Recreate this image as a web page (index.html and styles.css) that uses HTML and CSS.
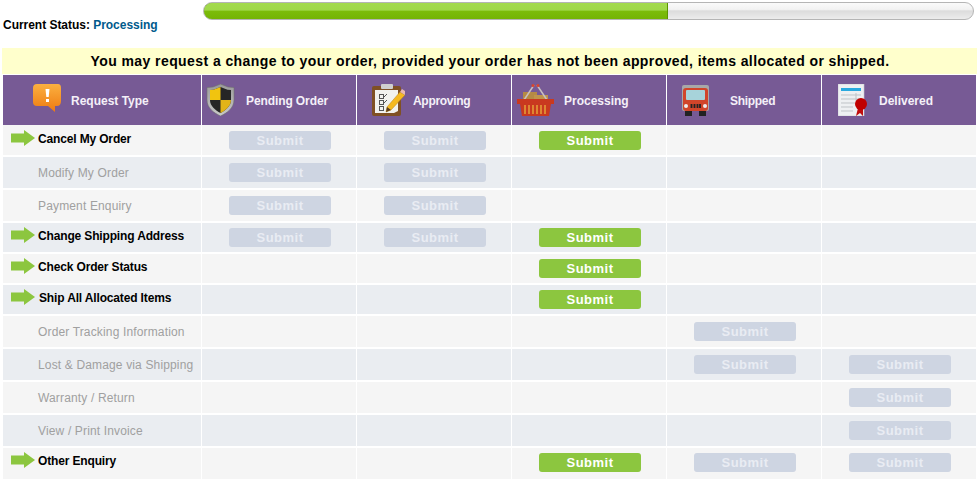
FILE: index.html
```html
<!DOCTYPE html>
<html lang="en">
  <head>
    <meta charset="UTF-8" />
    <meta name="viewport" content="width=device-width, initial-scale=1.0" />
    <title>Order Request</title>
    <link rel="stylesheet" href="styles.css">
  </head>
  <body>
    <svg class="defs" width="0" height="0">
      <symbol id="arrow" viewBox="0 0 24 16">
        <polygon points="0,3.500 13,3.500 13,0 24,8 13,16 13,12.500 0,12.500" fill="#8cc63f" />
      </symbol>
    </svg>

    <!-- status and progress -->
    <div class="top">
      <p class="status">Current Status: <span>Processing</span></p>
      <div class="bar"><div class="fill"></div></div>
    </div>

    <p class="notice">You may request a change to your order, provided your order has not been approved, items allocated or shipped.</p>

    <table class="grid">
      <thead>
        <tr>
          <th class="first">
            <div class="head">
              <svg class="icon" width="29" height="28" viewBox="0 0 29 28">
                <defs>
                  <linearGradient id="bubble" x1="0" y1="0" x2="0" y2="1">
                    <stop offset="0" stop-color="#fbb040" />
                    <stop offset="1" stop-color="#ee7a10" />
                  </linearGradient>
                  <linearGradient id="rim" x1="0" y1="0" x2="0" y2="1">
                    <stop offset="0" stop-color="#9a9a9a" />
                    <stop offset="1" stop-color="#c8c8c8" />
                  </linearGradient>
                </defs>
                <path d="M4 0H25Q28 0 28 4V17Q28 22 24 22H22V28L15 22H4Q0 22 0 18V4Q0 0 4 0Z" fill="url(#bubble)" />
                <path d="M12.500 5H16.500L15.700 13H13.300Z" fill="#fff" />
                <rect x="13" y="15" width="3" height="3" fill="#fff" />
              </svg>
              <span class="first-title">Request Type</span>
            </div>
          </th>
          <th>
            <div class="head">
              <svg class="icon shield" width="29" height="32" viewBox="0 0 29 32">
                <path d="M14.500 0L22 3L28 3.500V16C28 24 21 29 14.500 32C8 29 1 24 1 16V3.500L7 3Z" fill="url(#rim)" stroke="#6e6e6e" stroke-width="0.600" />
                <path d="M14.500 3L21.500 5.800L25 6V16C25 22 19.500 26.500 14.500 29C9.500 26.500 4 22 4 16V6L7.500 5.800Z" fill="#262626" />
                <path d="M14.500 3V16H4V6L7.500 5.800Z" fill="#f1c40f" />
                <path d="M14.500 16H25C25 22 19.500 26.500 14.500 29Z" fill="#e2b418" />
              </svg>
              <span class="pending">Pending Order</span>
            </div>
          </th>
          <th>
            <div class="head">
              <svg class="icon clip" width="33" height="32" viewBox="0 0 33 32">
                <rect x="0" y="2" width="29" height="30" rx="2" fill="#7f5024" />
                <path d="M3 6H26V27L22 29H3Z" fill="#f2f2ee" />
                <rect x="9" y="0" width="12" height="5" rx="1" fill="#cfcfcf" />
                <g fill="none" stroke="#555" stroke-width="1">
                  <rect x="7.500" y="10.500" width="4" height="4" />
                  <rect x="7.500" y="16.500" width="4" height="4" />
                  <rect x="7.500" y="22.500" width="4" height="4" />
                  <path d="M12 13L15 10M12 19L15 16" />
                </g>
                <path d="M15 23L28 8L33 11L19 26L14 28Z" fill="#f5b921" stroke="#b9811a" stroke-width="0.500" />
                <path d="M28 8L30 5L33 7L33 11Z" fill="#e9b9b0" />
                <path d="M15 23L19 26L14 28Z" fill="#5a3d1f" />
              </svg>
              <span class="approving">Approving</span>
            </div>
          </th>
          <th>
            <div class="head">
              <svg class="icon" width="37" height="32" viewBox="0 0 37 32">
                <rect x="6" y="8" width="14" height="13" fill="#b58a44" />
                <rect x="17" y="11" width="14" height="10" fill="#c0944c" />
                <path d="M7 16L17 1M20 1L30 16" stroke="#c8c0c0" stroke-width="1.500" fill="none" />
                <circle cx="16" cy="1.500" r="1.500" fill="#d8442c" />
                <circle cx="21" cy="1.500" r="1.500" fill="#d8442c" />
                <path d="M0 15H37V20H34L32 32H5L3 20H0Z" fill="#c9391f" />
                <path d="M8 21V30M12 21V30M16 21V30M20 21V30M24 21V30M28 21V30" stroke="#e5a13a" stroke-width="1.500" />
              </svg>
              <span class="processing">Processing</span>
            </div>
          </th>
          <th>
            <div class="head">
              <svg class="icon truck" width="27" height="31" viewBox="0 0 27 31">
                <rect x="0" y="0" width="27" height="26" rx="2" fill="#a8a8a8" />
                <rect x="1" y="3" width="25" height="23" rx="3" fill="#d1452a" />
                <rect x="4" y="5" width="19" height="10" rx="1" fill="#a7d3da" />
                <rect x="3" y="26" width="7" height="5" fill="#222" />
                <rect x="17" y="26" width="7" height="5" fill="#222" />
                <circle cx="4" cy="21" r="2" fill="#eee" />
                <circle cx="23" cy="21" r="2" fill="#eee" />
                <path d="M9.500 19V23M12.500 19V23M15.500 19V23M18 19V23" stroke="#222" stroke-width="1.800" />
              </svg>
              <span class="shipped">Shipped</span>
            </div>
          </th>
          <th>
            <div class="head">
              <svg class="icon cert" width="29" height="32" viewBox="0 0 29 32">
                <rect x="0" y="0" width="26" height="32" fill="#eef0f2" stroke="#c5c8cc" stroke-width="0.600" />
                <rect x="3" y="4" width="20" height="3" fill="#29a9df" />
                <path d="M3 11H23M3 15H23M3 19H17M3 23H15M3 27H15M18 9V17" stroke="#bfc3c7" stroke-width="1" />
                <path d="M20 24L18 32L22 29L25 32L25 24Z" fill="#c00d0d" />
                <circle cx="23" cy="20" r="6" fill="#c00000" />
              </svg>
              <span class="delivered">Delivered</span>
            </div>
          </th>
        </tr>
      </thead>
      <tbody>
        <tr class="r32">
          <td class="label on"><div class="cell"><svg class="arrow"><use href="#arrow" /></svg>Cancel My Order</div></td>
          <td><span class="btn off">Submit</span></td>
          <td><span class="btn off">Submit</span></td>
          <td><span class="btn">Submit</span></td>
          <td></td>
          <td></td>
        </tr>
        <tr class="r33 alt">
          <td class="label"><div class="cell">Modify My Order</div></td>
          <td><span class="btn off">Submit</span></td>
          <td><span class="btn off">Submit</span></td>
          <td></td>
          <td></td>
          <td></td>
        </tr>
        <tr class="r33">
          <td class="label"><div class="cell">Payment Enquiry</div></td>
          <td><span class="btn off">Submit</span></td>
          <td><span class="btn off">Submit</span></td>
          <td></td>
          <td></td>
          <td></td>
        </tr>
        <tr class="r31 alt">
          <td class="label on"><div class="cell"><svg class="arrow"><use href="#arrow" /></svg>Change Shipping Address</div></td>
          <td><span class="btn off">Submit</span></td>
          <td><span class="btn off">Submit</span></td>
          <td><span class="btn">Submit</span></td>
          <td></td>
          <td></td>
        </tr>
        <tr class="r31">
          <td class="label on"><div class="cell"><svg class="arrow"><use href="#arrow" /></svg>Check Order Status</div></td>
          <td></td>
          <td></td>
          <td><span class="btn">Submit</span></td>
          <td></td>
          <td></td>
        </tr>
        <tr class="r31 alt">
          <td class="label on"><div class="cell"><svg class="arrow"><use href="#arrow" /></svg><span class="nudge">Ship All Allocated Items</span></div></td>
          <td></td>
          <td></td>
          <td><span class="btn">Submit</span></td>
          <td></td>
          <td></td>
        </tr>
        <tr class="r33">
          <td class="label"><div class="cell">Order Tracking Information</div></td>
          <td></td>
          <td></td>
          <td></td>
          <td><span class="btn off">Submit</span></td>
          <td></td>
        </tr>
        <tr class="r33 alt">
          <td class="label"><div class="cell">Lost &amp; Damage via Shipping</div></td>
          <td></td>
          <td></td>
          <td></td>
          <td><span class="btn off">Submit</span></td>
          <td><span class="btn off">Submit</span></td>
        </tr>
        <tr class="r33">
          <td class="label"><div class="cell">Warranty / Return</div></td>
          <td></td>
          <td></td>
          <td></td>
          <td></td>
          <td><span class="btn off">Submit</span></td>
        </tr>
        <tr class="r33 alt">
          <td class="label"><div class="cell">View / Print Invoice</div></td>
          <td></td>
          <td></td>
          <td></td>
          <td></td>
          <td><span class="btn off">Submit</span></td>
        </tr>
        <tr class="last">
          <td class="label on"><div class="cell"><svg class="arrow"><use href="#arrow" /></svg>Other Enquiry</div></td>
          <td></td>
          <td></td>
          <td><span class="btn">Submit</span></td>
          <td><span class="btn off">Submit</span></td>
          <td><span class="btn off">Submit</span></td>
        </tr>
      </tbody>
    </table>
  </body>
</html>
```

FILE: styles.css
```css
* {
  margin: 0;
  padding: 0;
  box-sizing: border-box;
}

body {
  font-family: "Liberation Sans", Arial, sans-serif;
  font-size: 12px;
  background-color: #fff;
  color: #000;
  padding: 2px 2px 0;
}

.defs {
  position: absolute;
}

/* top area */
.top {
  display: flex;
  height: 46px;
}
.status {
  width: 201px;
  padding: 16px 0 0 1px;
  font-weight: bold;
  line-height: 14px;
  letter-spacing: -0.03px;
}
.status span {
  color: #005a8c;
}
.bar {
  width: 771px;
  height: 18px;
  border: 1px solid #b5b5b5;
  border-radius: 9px;
  overflow: hidden;
  background: linear-gradient(#fafafa 0, #f2f2f2 40%, #dcdcdc 50%, #ececec 100%);
}
.fill {
  width: 465px;
  height: 18px;
  margin: -1px 0 0 -1px;
  border: 1px solid #5c9400;
  background: linear-gradient(#a3da4d 0, #a0d84a 45%, #7cbc0a 50%, #74b404 100%);
  border-radius: 9px 0 0 9px;
}

/* notice */
.notice {
  width: 975px;
  height: 26px;
  padding-left: 1px;
  background-color: #ffffcc;
  font-size: 14px;
  font-weight: bold;
  letter-spacing: 0.42px;
  line-height: 26px;
  text-align: center;
}

/* table */
.grid {
  width: 973px;
  margin: 1px 0 0 1px;
  table-layout: fixed;
  border-collapse: separate;
  border-spacing: 0;
}
th {
  width: 155px;
  height: 50px;
  background-color: #775a95;
  color: #f4f0f8;
  font-size: 12px;
  border-left: 1px solid #fff;
  vertical-align: top;
}
th.first {
  width: 198px;
  border-left: 0;
}
.head {
  position: relative;
  height: 50px;
  line-height: 53px;
}
.icon {
  position: absolute;
  top: 9px;
  left: 5px;
}
.head span {
  position: absolute;
  top: 0;
  white-space: nowrap;
}
th.first .icon { left: 30px; }
.shield { left: 4px; }
.clip { left: 15px; }
.truck { left: 15px; top: 10px; }
.cert { left: 16px; }
.first-title { left: 68px; }
.pending { left: 44px; letter-spacing: -0.1px; }
.approving { left: 56px; letter-spacing: -0.3px; }
.processing { left: 52px; }
.shipped { left: 63px; letter-spacing: -0.3px; }
.delivered { left: 57px; }

td {
  background-color: #f5f5f5;
  border-left: 1px solid #fff;
  border-bottom: 2px solid #fff;
  padding-left: 2px;
  text-align: center;
  vertical-align: middle;
}
td.label {
  border-left: 0;
  padding-left: 0;
  text-align: left;
  color: #a0a0a0;
  letter-spacing: 0.15px;
}
tr.alt td {
  background-color: #eaedf1;
}
tr.r31 td { height: 31px; }
tr.r32 td { height: 32px; }
tr.r33 td { height: 33px; }
/* 最后一行没有底线，灰底要到底 */
tr.last td {
  height: 31px;
  border-bottom: 0;
  padding-bottom: 2px;
}

.cell {
  display: flex;
  align-items: center;
  padding-left: 35px;
  line-height: 14px;
}
td.on {
  letter-spacing: -0.15px;
}
.on .cell {
  padding: 0 0 3px 8px;
  font-weight: bold;
  color: #000;
}
.arrow {
  width: 24px;
  height: 16px;
  margin: 0 3px 2px 0;
}
.nudge {
  padding-left: 1px;
}

.btn {
  display: block;
  width: 102px;
  height: 19px;
  margin: 0 auto;
  border-radius: 3px;
  background-color: #8cc63f;
  color: #fff;
  font-size: 13px;
  font-weight: bold;
  letter-spacing: 0.5px;
  line-height: 19px;
  text-align: center;
}
.btn.off {
  background-color: #ced5e2;
  color: #e9ecf3;
}
```
